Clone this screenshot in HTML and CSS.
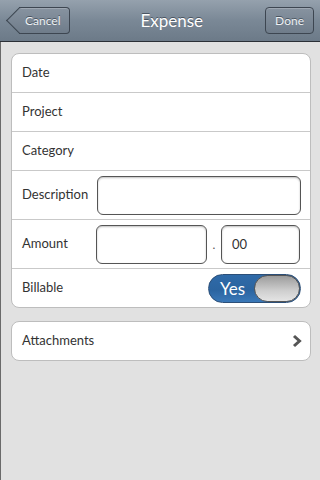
FILE: index.html
```html
<html lang="en">
<head>
    <meta charset="UTF-8">
    <meta name="viewport" content="width=device-width, initial-scale=1.0">
    <title>Expense</title>
    <link rel="stylesheet" href="styles.css">
</head>
<body>
    <div id="header">
        <button class="nav-button back">Cancel</button>
        <h1 id="title">Expense</h1>
        <button class="nav-button">Done</button>
    </div>
    <div id="content">
        <div class="group">
            <div class="row"><span class="label">Date</span></div>
            <div class="row"><span class="label">Project</span></div>
            <div class="row"><span class="label">Category</span></div>
            <div class="row tall">
                <span class="label">Description</span>
                <input class="field wide" type="text">
            </div>
            <div class="row tall">
                <span class="label">Amount</span>
                <input class="field whole" type="text">
                <span class="dot">.</span>
                <input class="field cents" type="text" value="00">
            </div>
            <div class="row">
                <span class="label">Billable</span>
                <div class="toggle">
                    <span class="toggle-text">Yes</span>
                    <span class="knob"></span>
                </div>
            </div>
        </div>
        <div class="group">
            <div class="row">
                <span class="label">Attachments</span>
                <svg class="chevron" width="10" height="14" viewBox="0 0 10 14">
                    <path d="M2 2 L7.5 7 L2 12" fill="none" stroke="#555" stroke-width="3"/>
                </svg>
            </div>
        </div>
    </div>
</body>
</html>
```

FILE: styles.css
```css
body {
    margin: 0;
    font-family: Lato, "Open Sans", sans-serif;
    background: #e1e1e1;
    height: 480px;
    overflow: hidden;
}

#header {
    height: 41px;
    display: flex;
    align-items: center;
    justify-content: space-between;
    padding: 0 6px 0 19px;
    background: linear-gradient(#95a1ad, #7a8896 50%, #6c7a88);
    border-bottom: 1px solid #2b3037;
    box-sizing: content-box;
}

#title {
    margin: 0;
    color: #fff;
    font-size: 17px;
    font-weight: normal;
    text-shadow: 0 -1px 0 #4a5561;
    padding-left: 8px;
}

.nav-button {
    position: relative;
    z-index: 0;
    height: 27px;
    padding: 0 9px;
    color: #eef1f4;
    font-family: Lato, "Open Sans", sans-serif;
    font-size: 12px;
    background: linear-gradient(#8793a0, #6f7c8a);
    border: 1px solid #3d4651;
    border-radius: 4px;
    text-shadow: 0 -1px 0 #4a5561;
    box-shadow: inset 0 1px 0 rgba(255, 255, 255, 0.2);
}

.back {
    border-left: none;
    border-radius: 0 4px 4px 0;
    padding: 0 9px 0 6px;
}

.back::before {
    content: "";
    position: absolute;
    z-index: -1;
    left: -9px;
    top: 3px;
    width: 18px;
    height: 18px;
    transform: rotate(45deg);
    background: linear-gradient(135deg, #8793a0, #6f7c8a);
    border-left: 1px solid #3d4651;
    border-bottom: 1px solid #3d4651;
}

#content {
    height: 438px;
    border-left: 1px solid #6a6a6a;
    padding: 11px 9px 0 10px;
}

.group {
    background: #fff;
    border: 1px solid #bdbdbd;
    border-radius: 8px;
    margin-bottom: 13px;
}

.row {
    height: 38px;
    display: flex;
    align-items: center;
    padding: 0 9px 0 10px;
    border-top: 1px solid #c9c9c9;
}

.row:first-child {
    border-top: none;
}

.row.tall {
    height: 48px;
}

.label {
    color: #333;
    font-size: 13px;
    flex: 1;
    margin-top: -2px;
}

.row.tall .label {
    flex: none;
    width: 75px;
}

.field {
    height: 39px;
    box-sizing: border-box;
    border: 1px solid #555;
    border-radius: 6px;
    box-shadow: inset 0 1px 2px rgba(0, 0, 0, 0.25);
    font-family: Lato, "Open Sans", sans-serif;
    font-size: 13px;
    color: #333;
    padding: 0 10px;
    outline: none;
}

.wide {
    width: 204px;
}

.whole {
    width: 111px;
    margin-left: -1px;
}

.dot {
    width: 14px;
    text-align: center;
    color: #555;
    font-size: 12px;
}

.cents {
    width: 79px;
}

.toggle {
    width: 93px;
    height: 29px;
    box-sizing: border-box;
    display: flex;
    align-items: center;
    justify-content: space-between;
    border-radius: 15px;
    border: 1px solid #2c4f78;
    background: linear-gradient(#2f6aa8, #2b64a0 55%, #3a78b8);
}

.toggle-text {
    color: #fff;
    font-size: 17px;
    padding-left: 11px;
}

.knob {
    width: 46px;
    height: 27px;
    box-sizing: border-box;
    border-radius: 14px;
    border: 1px solid #555;
    background: linear-gradient(#9c9c9c, #cfcfcf 60%, #e4e4e4);
}

.chevron {
    margin-right: -1px;
}
```
